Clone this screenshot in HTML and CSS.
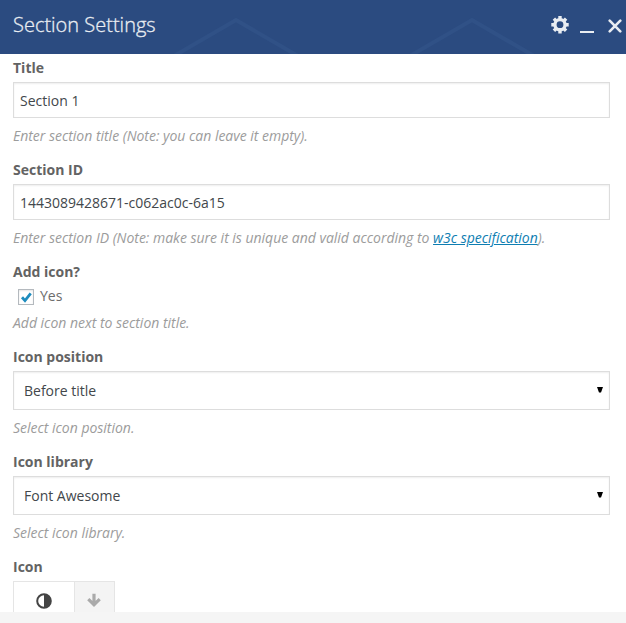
FILE: index.html
```
<!DOCTYPE html>
<html lang="en">
<head>
<meta charset="utf-8">
<title>Section Settings</title>
<link rel="stylesheet" href="styles.css">
</head>
<body>
<div class="panel">
  <header class="panel-header">
    <svg class="pattern" width="626" height="54" viewBox="0 0 626 54" aria-hidden="true">
      <path d="M174 56 L236 20 L298 56 M410 56 L472 20 L534 56"/>
    </svg>
    <h1 class="panel-title">Section Settings</h1>
    <div class="controls">
      <svg class="gear" width="18" height="18" viewBox="0 0 18 18">
        <circle class="ring" cx="9" cy="8.7" r="5.1"/>
        <path class="teeth" d="M9 0V3.1M9 14.3v3.1M.3 8.7h3.1M14.6 8.7h3.1M2.9 2.6 5 4.7M13 12.7l2.1 2.1M2.9 14.8 5 12.7M13 4.7l2.1-2.1"/>
      </svg>
      <svg class="minimize" width="14" height="18" viewBox="0 0 14 18"><path d="M0 15h14v2H0z"/></svg>
      <svg class="close" width="14" height="18" viewBox="0 0 14 18"><path d="M1.7 4.7 12.3 15.3M12.3 4.7 1.7 15.3"/></svg>
    </div>
  </header>
  <main class="panel-body">
    <section class="field">
      <label class="label" for="title">Title</label>
      <input class="input" id="title" type="text" value="Section 1">
      <p class="hint">Enter section title (Note: you can leave it empty).</p>
    </section>
    <section class="field">
      <label class="label" for="section-id">Section ID</label>
      <input class="input" id="section-id" type="text" value="1443089428671-c062ac0c-6a15">
      <p class="hint">Enter section ID (Note: make sure it is unique and valid according to <a href="#">w3c specification</a>).</p>
    </section>
    <section class="field">
      <div class="label">Add icon?</div>
      <div class="check-row">
        <span class="checkbox"><svg width="14" height="14" viewBox="0 0 14 14"><path d="M3 7.2 6 10.6 11.7 3.4"/></svg></span>
        <span>Yes</span>
      </div>
      <p class="hint">Add icon next to section title.</p>
    </section>
    <section class="field">
      <div class="label">Icon position</div>
      <div class="select"><span>Before title</span><svg width="6" height="6" viewBox="0 0 6 6"><path d="M0 0h6L4 5.5H2z"/></svg></div>
      <p class="hint">Select icon position.</p>
    </section>
    <section class="field">
      <div class="label">Icon library</div>
      <div class="select"><span>Font Awesome</span><svg width="6" height="6" viewBox="0 0 6 6"><path d="M0 0h6L4 5.5H2z"/></svg></div>
      <p class="hint">Select icon library.</p>
    </section>
    <section class="field">
      <div class="label">Icon</div>
      <div class="icon-picker">
        <span class="chosen"><svg width="16" height="16" viewBox="0 0 16 16"><circle cx="8" cy="8" r="6.8"/><path d="M8 1.5a6.5 6.5 0 0 1 0 13z"/></svg></span>
        <span class="toggle"><svg width="16" height="16" viewBox="0 0 16 16"><path d="M8 1.8V12M2.3 7.2 8 12.7 13.7 7.2"/></svg></span>
      </div>
    </section>
  </main>
  <footer class="panel-footer"></footer>
</div>
</body>
</html>
```
FILE: styles.css
```
* { box-sizing: border-box; }
body {
  margin: 0;
  background: #fff;
  color: #6c6c6c;
  font: 14px/20px "Open Sans", sans-serif;
}
.panel { display: flex; flex-direction: column; height: 623px; overflow: hidden; }
.panel-header {
  position: relative;
  display: flex;
  flex: 0 0 54px;
  justify-content: space-between;
  padding: 0 4px 0 13px;
  background: #2b4b80;
}
.pattern { position: absolute; top: 0; left: 0; fill: none; stroke: #305186; stroke-width: 4; }
.panel-title {
  position: relative;
  margin: 0;
  color: #e9edf2;
  font-size: 20px;
  font-weight: 300;
  line-height: 50px;
  -webkit-text-stroke: .3px #e9edf2;
}
.controls { position: relative; display: flex; padding-top: 16px; }
.gear { margin-right: 11px; fill: none; stroke: #e9edf2; }
.ring { stroke-width: 3.4; }
.teeth { stroke-width: 3.4; }
.minimize { margin-right: 14px; fill: #e9edf2; }
.close { stroke: #e9edf2; stroke-width: 2.6; stroke-linecap: round; }
.panel-body { flex: 1; min-height: 0; overflow: hidden; padding: 4px 16px 0 13px; }
.field { margin-bottom: 14px; }
.label { display: block; margin-bottom: 4px; color: #636363; font-weight: 700; }
.input {
  display: block;
  width: 100%;
  height: 36px;
  padding: 0 6px;
  border: 1px solid #ddd;
  box-shadow: inset 0 1px 2px rgba(0, 0, 0, .07);
  color: #42474b;
  font: inherit;
}
.hint { margin: 8px 0 0; color: #9c9c9c; font-style: italic; letter-spacing: -.017px; }
.hint a { color: #0e7eb2; text-decoration: underline; }
.check-row { display: flex; align-items: center; gap: 6px; height: 20px; padding-left: 5px; }
.checkbox {
  width: 16px;
  height: 16px;
  margin-top: 2px;
  border: 1px solid #b4b9be;
  box-shadow: inset 0 1px 2px rgba(0, 0, 0, .1);
}
.checkbox svg { display: block; fill: none; stroke: #1e8cbe; stroke-width: 2.8; }
.check-row + .hint { margin-top: 7px; }
.select {
  display: flex;
  align-items: center;
  justify-content: space-between;
  height: 39px;
  padding: 0 6px 0 10px;
  border: 1px solid #ddd;
  box-shadow: inset 0 1px 2px rgba(0, 0, 0, .07);
  color: #42474b;
}
.select svg { margin-bottom: 2px; fill: #000; }
.icon-picker { display: flex; width: 102px; height: 40px; border: 1px solid #e5e5e5; }
.chosen, .toggle { display: flex; align-items: center; justify-content: center; }
.chosen { width: 61px; border-right: 1px solid #e5e5e5; }
.chosen svg { fill: #444; }
.chosen circle { fill: none; stroke: #444; stroke-width: 2; }
.toggle { flex: 1; background: #f4f4f4; }
.toggle svg { margin: 0 1px 2px 0; fill: none; stroke: #aaa; stroke-width: 3.2; }
.panel-footer { flex: 0 0 11px; background: #f5f5f5; }
```
